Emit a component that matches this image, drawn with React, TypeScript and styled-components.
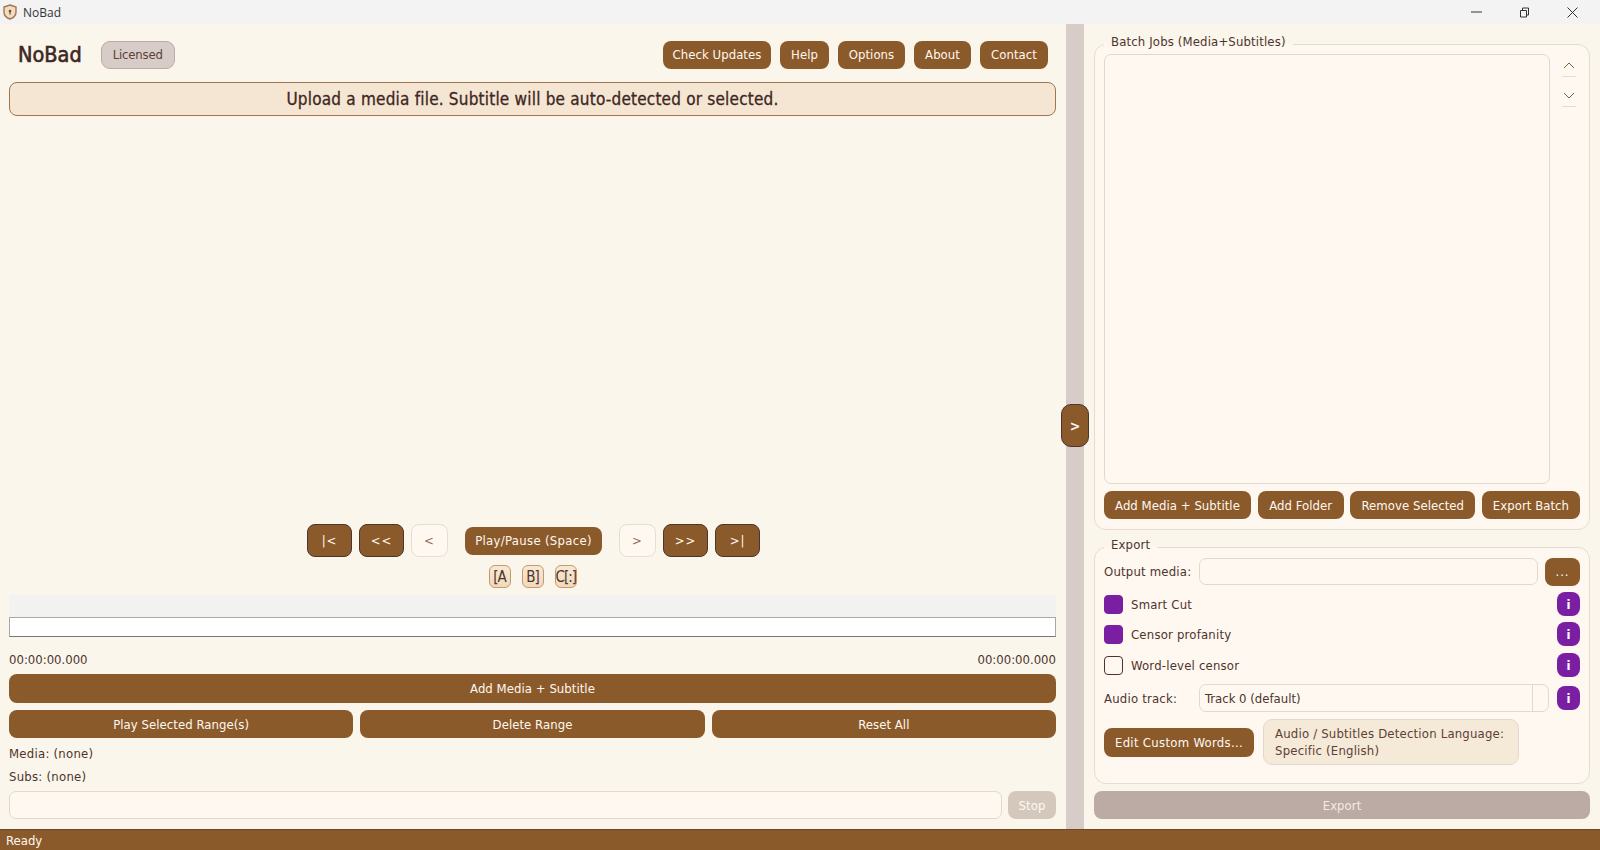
import React from 'react';
import styled, { createGlobalStyle } from 'styled-components';

const GlobalStyle = createGlobalStyle`
  html, body {
    margin: 0;
    padding: 0;
    height: 100%;
    overflow: hidden;
  }
  body {
    font-family: "DejaVu Sans", Tahoma, sans-serif;
    font-stretch: condensed;
    font-size: 13px;
    color: #4e342e;
  }
  * { box-sizing: border-box; }
`;

const Window = styled.div`
  width: 1600px;
  height: 850px;
  display: flex;
  flex-direction: column;
  background: #faf6eb;
`;

const TitleBar = styled.div`
  height: 24px;
  flex: none;
  display: flex;
  align-items: center;
  background: #f3f3f3;
  padding: 0 4px 0 3px;
  font-family: "Open Sans", sans-serif;
  font-stretch: normal;
  font-size: 12px;
  color: #333;
`;

const TitleText = styled.span`
  margin-left: 6px;
`;

const WindowButtons = styled.div`
  margin-left: auto;
  display: flex;
  align-items: center;
`;

const WindowButton = styled.div`
  width: 48px;
  height: 24px;
  display: flex;
  align-items: center;
  justify-content: center;
  color: #333;
`;

const Main = styled.div`
  flex: 1;
  min-height: 0;
  display: flex;
  position: relative;
`;

const LeftPanel = styled.div`
  width: 1066px;
  flex: none;
  display: flex;
  flex-direction: column;
  padding: 16px 10px 10px 9px;
`;

const Sash = styled.div`
  width: 18px;
  flex: none;
  background: #d7ccc8;
`;

const SashHandle = styled.button`
  position: absolute;
  left: 1061px;
  top: 380px;
  width: 28px;
  height: 43px;
  padding: 0;
  background: #8b5a2b;
  border: 1px solid #4e342e;
  border-radius: 10px;
  color: #fff8f0;
  font: inherit;
  font-weight: bold;
  font-size: 14px;
`;

const RightPanel = styled.div`
  flex: 1;
  min-width: 0;
  display: flex;
  flex-direction: column;
  padding: 10px;
`;

const HeaderRow = styled.div`
  height: 29px;
  flex: none;
  display: flex;
  align-items: center;
  padding: 0 8px 0 9px;
`;

const AppName = styled.h1`
  margin: 0;
  font-size: 21.5px;
  font-weight: normal;
  -webkit-text-stroke: 0.6px #3e2723;
  color: #3e2723;
`;

const LicenseBadge = styled.span`
  margin-left: 19px;
  width: 74px;
  height: 28px;
  display: flex;
  align-items: center;
  justify-content: center;
  background: #d7ccc8;
  border: 1px solid #bcaaa4;
  border-radius: 9px;
  color: #5d4037;
  font-size: 13px;
  letter-spacing: -0.2px;
`;

const HeaderButtons = styled.div`
  margin-left: auto;
  display: flex;
  gap: 9px;
`;

const Button = styled.button<{ $h?: number; $w?: number; $grow?: boolean; $wide?: boolean }>`
  height: ${p => p.$h ?? 28}px;
  ${p => (p.$w ? `width: ${p.$w}px;` : '')}
  ${p => (p.$grow ? 'flex: 1;' : 'flex: none;')}
  padding: 0;
  background: #8b5a2b;
  border: none;
  border-radius: 8px;
  color: #fff8f0;
  font: inherit;
  font-size: 13px;
  letter-spacing: ${p => (p.$wide ? 0.3 : 0.05)}px;
  white-space: nowrap;
`;

const Banner = styled.div`
  flex: none;
  margin-top: 13px;
  height: 34px;
  display: flex;
  align-items: center;
  justify-content: center;
  background: #f5e6d3;
  border: 1px solid #a1764f;
  border-radius: 8px;
  color: #3e2723;
  font-size: 17px;
  letter-spacing: 0.2px;
  -webkit-text-stroke: 0.3px #3e2723;
`;

const VideoArea = styled.div`
  flex: 1;
  min-height: 0;
`;

const TransportRow = styled.div`
  flex: none;
  display: flex;
  align-items: center;
  justify-content: center;
  gap: 7px;
  padding-left: 2px;
`;

const StepButton = styled.button<{ $light?: boolean }>`
  width: ${p => (p.$light ? 37 : 45)}px;
  height: 33px;
  padding: 0;
  background: ${p => (p.$light ? '#fff8f0' : '#8b5a2b')};
  border: 1px solid ${p => (p.$light ? '#e8ddd3' : '#4e342e')};
  border-radius: 8px;
  color: ${p => (p.$light ? '#8d6e63' : '#fff8f0')};
  font: inherit;
  font-size: 13px;
  letter-spacing: 1px;
`;

const PlayButton = styled(Button)`
  margin: 0 10px;
  width: 137px;
`;

const MarkerRow = styled.div`
  flex: none;
  margin-top: 8px;
  display: flex;
  justify-content: center;
  gap: 11px;
`;

const MarkerButton = styled.button`
  width: 22px;
  height: 23px;
  padding: 0;
  background: linear-gradient(#f8e8d4, #f1d9bb);
  border: 1.5px solid #c49a6c;
  border-radius: 6px;
  color: #4e342e;
  font: inherit;
  font-size: 15px;
  letter-spacing: -1px;
  overflow: hidden;
  white-space: nowrap;
`;

const TimelineStrip = styled.div`
  flex: none;
  margin-top: 7px;
  height: 22px;
  background: #f2f2f0;
`;

const TimelineBar = styled.div`
  flex: none;
  height: 20px;
  background: #fff;
  border: 1px solid #a8a8a8;
  border-bottom-color: #777;
`;

const TimeRow = styled.div`
  flex: none;
  margin-top: 14px;
  height: 16px;
  display: flex;
  align-items: center;
  justify-content: space-between;
`;

const ButtonRow = styled.div`
  flex: none;
  margin-top: 7px;
  display: flex;
  gap: 7px;
`;

const InfoLine = styled.div`
  flex: none;
  height: 16px;
  margin-top: 7px;
  display: flex;
  align-items: center;
  letter-spacing: 0.25px;
`;

const CommandRow = styled.div`
  flex: none;
  margin-top: 7px;
  display: flex;
  gap: 6px;
`;

const TextBox = styled.input<{ $h?: number }>`
  flex: 1;
  min-width: 0;
  ${p => (p.$h ? `height: ${p.$h}px;` : '')}
  background: #fff8f0;
  border: 1px solid #e3d8ce;
  border-radius: 7px;
  outline: none;
  font: inherit;
`;

const StopButton = styled(Button)`
  width: 48px;
  background: #d4c8bd;
  color: #fff8f0;
`;

const Group = styled.fieldset<{ $grow?: boolean }>`
  margin: 0;
  min-width: 0;
  display: flex;
  flex-direction: column;
  background: #fff8f0;
  border: 1px solid #e6dbd0;
  border-radius: 12px;
  ${p => (p.$grow ? 'flex: 1; min-height: 0;' : 'flex: none; margin-top: 7px;')}
  padding: 0 9px ${p => (p.$grow ? 10 : 18)}px;
`;

const GroupTitle = styled.legend`
  padding: 0 7px 4px;
  line-height: 16px;
  color: #4e342e;
  letter-spacing: 0.15px;
  background: linear-gradient(#faf6eb 50%, transparent 50%);
`;

const ListRow = styled.div`
  flex: 1;
  min-height: 0;
  display: flex;
`;

const JobList = styled.div`
  flex: 1;
  min-width: 0;
  background: #fff8f0;
  border: 1px solid #e3d8ce;
  border-radius: 7px;
`;

const ReorderColumn = styled.div`
  width: 30px;
  flex: none;
  display: flex;
  flex-direction: column;
  align-items: flex-end;
  padding-top: 1px;
  gap: 8px;
`;

const ReorderButton = styled.div`
  width: 14px;
  height: 22px;
  margin-right: 4px;
  display: flex;
  align-items: center;
  justify-content: center;
  border-bottom: 1px solid #e6dbd0;
  color: #8b5a2b;
`;

const BatchButtons = styled.div`
  flex: none;
  margin-top: 7px;
  display: flex;
  justify-content: space-between;
`;

const GroupBody = styled.div`
  display: flex;
  flex-direction: column;
  gap: 6px;
`;

const FieldRow = styled.div<{ $spaced?: boolean }>`
  height: ${p => (p.$spaced ? 28 : 29)}px;
  ${p => (p.$spaced ? 'margin-top: 1px;' : '')}
  display: flex;
  align-items: center;
`;

const FieldLabel = styled.span`
  width: 95px;
  flex: none;
  letter-spacing: 0.2px;
`;

const BrowseButton = styled(Button)`
  width: 35px;
  margin-left: 7px;
  letter-spacing: 1px;
`;

const OptionRow = styled.div<{ $spaced?: boolean }>`
  height: 24px;
  ${p => (p.$spaced ? 'margin-top: 1px;' : '')}
  display: flex;
  align-items: center;
`;

const CheckMark = styled.span<{ $on?: boolean }>`
  width: 19px;
  height: 19px;
  flex: none;
  border-radius: 4px;
  background: ${p => (p.$on ? '#7b1fa2' : '#fff8f0')};
  border: 1px solid ${p => (p.$on ? '#7b1fa2' : '#4e342e')};
`;

const OptionLabel = styled.span`
  margin-left: 8px;
  letter-spacing: 0.2px;
`;

const InfoButton = styled.button`
  margin-left: auto;
  width: 23px;
  height: 24px;
  flex: none;
  padding: 0;
  background: #7b1fa2;
  border: none;
  border-radius: 8px;
  color: #fff;
  font: inherit;
  font-weight: bold;
  font-size: 13px;
`;

const ComboBox = styled.div`
  width: 350px;
  height: 28px;
  display: flex;
  align-items: center;
  padding-left: 5px;
  background: #fff8f0;
  border: 1px solid #e3d8ce;
  border-radius: 7px;
`;

const ComboText = styled.span`
  flex: 1;
`;

const ComboArrow = styled.span`
  width: 16px;
  height: 100%;
  border-left: 1px solid #e3d8ce;
`;

const LanguageRow = styled.div`
  margin-top: 1px;
  display: flex;
  align-items: center;
  gap: 9px;
`;

const LanguageBox = styled.div`
  width: 256px;
  height: 46px;
  padding: 6px 11px;
  background: #f5e9d7;
  border: 1px solid #e3d8ce;
  border-radius: 9px;
  line-height: 16.5px;
  color: #5d4037;
  letter-spacing: 0.2px;
`;

const ExportButton = styled(Button)`
  flex: none;
  margin-top: 7px;
  width: 100%;
  background: #bcaaa4;
  color: #f3ece6;
`;

const StatusBar = styled.div`
  height: 21px;
  flex: none;
  display: flex;
  align-items: center;
  padding-left: 6px;
  background: #8b5a2b;
  border-top: 1px solid #6f4720;
  color: #fff8f0;
`;

const ShieldIcon = () => (
  <svg width="14" height="16" viewBox="0 0 14 16">
    <path d="M7 1 L13 3 V8 C13 11.5 10 14 7 15 C4 14 1 11.5 1 8 V3 Z" fill="#f3dcc0" stroke="#a1764f" strokeWidth="1.4" />
    <circle cx="7" cy="7" r="1.3" fill="#6d4c2f" />
    <rect x="6.4" y="7.5" width="1.2" height="3" fill="#6d4c2f" />
  </svg>
);

const App: React.FC = () => {
  return (
    <Window>
      <GlobalStyle />
      <TitleBar>
        <ShieldIcon />
        <TitleText>NoBad</TitleText>
        <WindowButtons>
          <WindowButton>
            <svg width="11" height="10" viewBox="0 0 11 10">
              <path d="M0 5 H11" stroke="currentColor" fill="none" />
            </svg>
          </WindowButton>
          <WindowButton>
            <svg width="11" height="11" viewBox="0 0 11 11">
              <path d="M1.5 3.5 H7.5 V10 H1.5 Z M3.5 3.5 V1 H9.5 V8 H7.5" stroke="currentColor" fill="none" />
            </svg>
          </WindowButton>
          <WindowButton>
            <svg width="11" height="11" viewBox="0 0 11 11">
              <path d="M0.5 0.5 L10.5 10.5 M10.5 0.5 L0.5 10.5" stroke="currentColor" fill="none" />
            </svg>
          </WindowButton>
        </WindowButtons>
      </TitleBar>

      <Main>
        <LeftPanel>
          <HeaderRow>
            <AppName>NoBad</AppName>
            <LicenseBadge>Licensed</LicenseBadge>
            <HeaderButtons>
              <Button $w={108}>Check Updates</Button>
              <Button $w={49}>Help</Button>
              <Button $w={67}>Options</Button>
              <Button $w={57}>About</Button>
              <Button $w={68}>Contact</Button>
            </HeaderButtons>
          </HeaderRow>
          <Banner>Upload a media file. Subtitle will be auto-detected or selected.</Banner>
          <VideoArea />
          <TransportRow>
            <StepButton>|&lt;</StepButton>
            <StepButton>&lt;&lt;</StepButton>
            <StepButton $light>&lt;</StepButton>
            <PlayButton $wide>Play/Pause (Space)</PlayButton>
            <StepButton $light>&gt;</StepButton>
            <StepButton>&gt;&gt;</StepButton>
            <StepButton>&gt;|</StepButton>
          </TransportRow>
          <MarkerRow>
            <MarkerButton>[A</MarkerButton>
            <MarkerButton>B]</MarkerButton>
            <MarkerButton>C[:]</MarkerButton>
          </MarkerRow>
          <TimelineStrip />
          <TimelineBar />
          <TimeRow>
            <span>00:00:00.000</span>
            <span>00:00:00.000</span>
          </TimeRow>
          <ButtonRow>
            <Button $grow $h={29}>Add Media + Subtitle</Button>
          </ButtonRow>
          <ButtonRow>
            <Button $grow>Play Selected Range(s)</Button>
            <Button $grow>Delete Range</Button>
            <Button $grow>Reset All</Button>
          </ButtonRow>
          <InfoLine>Media: (none)</InfoLine>
          <InfoLine>Subs: (none)</InfoLine>
          <CommandRow>
            <TextBox readOnly />
            <StopButton>Stop</StopButton>
          </CommandRow>
        </LeftPanel>

        <Sash />
        <SashHandle>&gt;</SashHandle>

        <RightPanel>
          <Group $grow>
            <GroupTitle>Batch Jobs (Media+Subtitles)</GroupTitle>
            <ListRow>
              <JobList />
              <ReorderColumn>
                <ReorderButton>
                  <svg width="12" height="7" viewBox="0 0 12 7">
                    <path d="M1 6 L6 1 L11 6" stroke="currentColor" fill="none" />
                  </svg>
                </ReorderButton>
                <ReorderButton>
                  <svg width="12" height="7" viewBox="0 0 12 7">
                    <path d="M1 1 L6 6 L11 1" stroke="currentColor" fill="none" />
                  </svg>
                </ReorderButton>
              </ReorderColumn>
            </ListRow>
            <BatchButtons>
              <Button $w={147}>Add Media + Subtitle</Button>
              <Button $w={86}>Add Folder</Button>
              <Button $w={125}>Remove Selected</Button>
              <Button $w={98}>Export Batch</Button>
            </BatchButtons>
          </Group>

          <Group>
            <GroupTitle>Export</GroupTitle>
            <GroupBody>
              <FieldRow>
                <FieldLabel>Output media:</FieldLabel>
                <TextBox readOnly $h={27} />
                <BrowseButton>...</BrowseButton>
              </FieldRow>
              <OptionRow>
                <CheckMark $on />
                <OptionLabel>Smart Cut</OptionLabel>
                <InfoButton>i</InfoButton>
              </OptionRow>
              <OptionRow>
                <CheckMark $on />
                <OptionLabel>Censor profanity</OptionLabel>
                <InfoButton>i</InfoButton>
              </OptionRow>
              <OptionRow $spaced>
                <CheckMark />
                <OptionLabel>Word-level censor</OptionLabel>
                <InfoButton>i</InfoButton>
              </OptionRow>
              <FieldRow $spaced>
                <FieldLabel>Audio track:</FieldLabel>
                <ComboBox>
                  <ComboText>Track 0 (default)</ComboText>
                  <ComboArrow />
                </ComboBox>
                <InfoButton>i</InfoButton>
              </FieldRow>
              <LanguageRow>
                <Button $w={150} $h={29} $wide>Edit Custom Words...</Button>
                <LanguageBox>
                  Audio / Subtitles Detection Language:
                  <br />
                  Specific (English)
                </LanguageBox>
              </LanguageRow>
            </GroupBody>
          </Group>

          <ExportButton>Export</ExportButton>
        </RightPanel>
      </Main>

      <StatusBar>Ready</StatusBar>
    </Window>
  );
};

export default App;
